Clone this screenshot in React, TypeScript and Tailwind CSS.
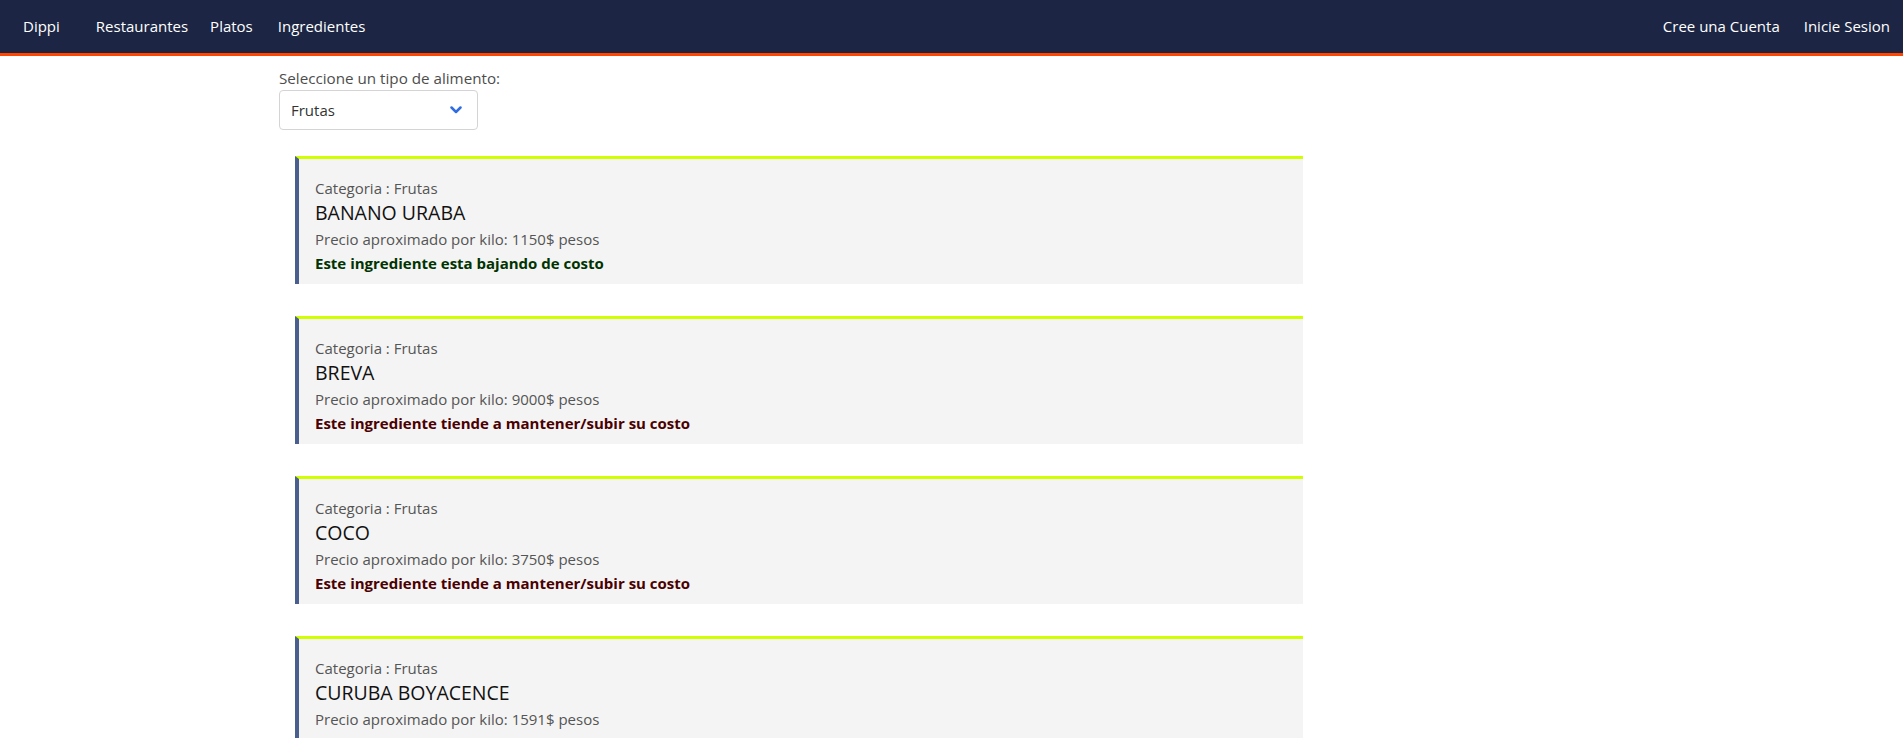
import React from "react";

type Item = { name: string; price: string; up: boolean; msg: string };

const items: Item[] = [
  { name: "BANANO URABA", price: "1150", up: false, msg: "Este ingrediente esta bajando de costo" },
  { name: "BREVA", price: "9000", up: true, msg: "Este ingrediente tiende a mantener/subir su costo" },
  { name: "COCO", price: "3750", up: true, msg: "Este ingrediente tiende a mantener/subir su costo" },
  { name: "CURUBA BOYACENCE", price: "1591", up: true, msg: "Este ingrediente esta subiendo de costo" },
];

function Card({ item }: { item: Item }) {
  return (
    <div className="w-[1008px] bg-[#f4f4f4] border-t-[3px] border-l-[4px] border-t-[#d2ff00] border-l-[#4b5f8e] pl-[16px] pt-[17px] pb-[10px]">
      <div className="text-[15px] leading-[24px] text-[#555555]">Categoria : Frutas</div>
      <div className="text-[19.5px] leading-[26px] text-[#111111]">{item.name}</div>
      <div className="text-[15px] leading-[26px] text-[#555555]">
        Precio aproximado por kilo: {item.price}$ pesos
      </div>
      <div
        className={
          item.up
            ? "text-[15px] leading-[22px] font-bold text-[#4a0000]"
            : "text-[15px] leading-[22px] font-bold text-[#003300]"
        }
      >
        {item.msg}
      </div>
    </div>
  );
}

export default function App() {
  return (
    <div className="min-h-screen bg-white" style={{ fontFamily: '"Open Sans", "Noto Sans", sans-serif' }}>
      <nav className="h-[56px] bg-[#1c2644] border-b-[3px] border-[#ff4500] flex items-center justify-between text-white text-[15px]">
        <div className="flex items-center">
          <span className="ml-[23px] mr-[36px]">Dippi</span>
          <span className="mr-[22px]">Restaurantes</span>
          <span className="mr-[25px]">Platos</span>
          <span>Ingredientes</span>
        </div>
        <div className="flex items-center gap-[24px] mr-[13px]">
          <span>Cree una Cuenta</span>
          <span>Inicie Sesion</span>
        </div>
      </nav>
      <div className="pl-[279px] pt-[10px]">
        <div className="text-[15.2px] leading-[24px] text-[#4d4d4d]">Seleccione un tipo de alimento:</div>
        <div className="w-[199px] h-[40px] border border-[#d4d4d4] rounded-[4px] flex items-center justify-between pl-[11px] pr-[15px] text-[15px] text-[#333333] bg-white">
          <span>Frutas</span>
          <svg width="12" height="8" viewBox="0 0 12 8">
            <polyline points="1.5,1.5 6,6 10.5,1.5" fill="none" stroke="#2f6de0" strokeWidth="2.5" strokeLinecap="round" strokeLinejoin="round" />
          </svg>
        </div>
        <div className="ml-[16px] mt-[26px] flex flex-col gap-[32px]">
          {items.map((it) => (
            <Card key={it.name} item={it} />
          ))}
        </div>
      </div>
    </div>
  );
}
